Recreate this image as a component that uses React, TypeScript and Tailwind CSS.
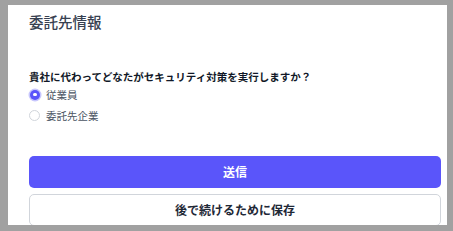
import { useState } from 'react';

const options = ['従業員', '委託先企業'];

export default function App() {
  const [selected, setSelected] = useState(0);

  return (
    <div
      className="w-[453px] h-[231px] bg-[#a1a1a1] pt-[5px] pl-[8px] pr-[6px] overflow-hidden"
      style={{ fontFamily: '"Noto Sans CJK JP", "Noto Sans", sans-serif' }}
    >
      <div className="bg-white h-[220px] overflow-hidden pl-[21px] pr-[6px] pt-[7px]">
        {/* Title */}
        <h2 className="text-[14.5px] leading-[20px] font-medium text-[#374151]">委託先情報</h2>

        {/* Question */}
        <p className="mt-[38px] text-[10.5px] leading-[14px] font-semibold text-[#111827]">
          貴社に代わってどなたがセキュリティ対策を実行しますか？
        </p>
        <div className="flex flex-col">
          {options.map((label, i) => (
            <label
              key={label}
              onClick={() => setSelected(i)}
              className="flex items-center h-[21px] cursor-pointer"
            >
              {selected === i ? (
                <span className="ml-[1px] w-[10px] h-[10px] rounded-full bg-[#5a55fa] ring-[1.5px] ring-[#c7c6fd] flex items-center justify-center">
                  <span className="w-[3.5px] h-[3.5px] rounded-full bg-white" />
                </span>
              ) : (
                <span className="w-[11px] h-[11px] rounded-full border border-[#d1d5db] bg-white" />
              )}
              <span className="ml-[6px] text-[10.5px] text-[#4b5563]">{label}</span>
            </label>
          ))}
        </div>

        {/* Actions */}
        <div className="mt-[30px] flex flex-col gap-[6px]">
          <button className="h-[32px] w-full rounded-[5px] bg-[#5a55fa] text-white text-[12px] font-semibold">
            送信
          </button>
          <button className="h-[32px] w-full rounded-[5px] border border-[#d1d5db] bg-white text-[#1f2937] text-[12px] font-semibold">
            後で続けるために保存
          </button>
        </div>
      </div>
    </div>
  );
}
